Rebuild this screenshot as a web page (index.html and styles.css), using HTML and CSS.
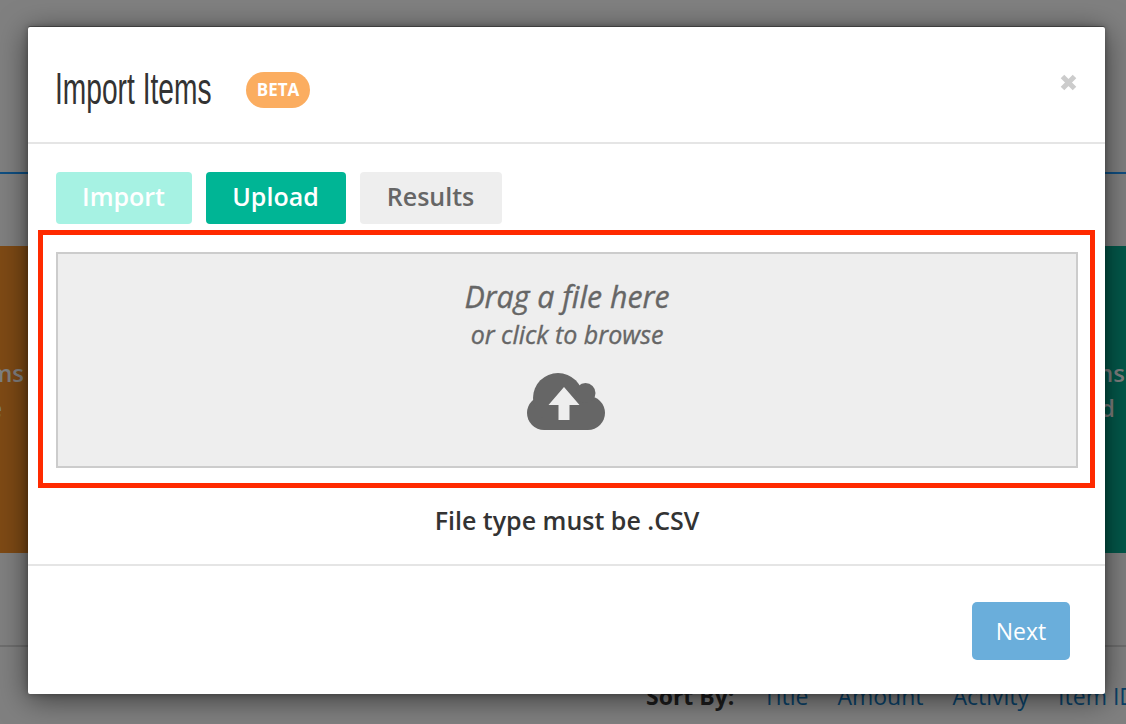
FILE: index.html
```html
<!DOCTYPE html>
<html lang="en">
<head>
<meta charset="utf-8">
<title>Import Items</title>
<link rel="stylesheet" href="styles.css">
</head>
<body>
<div class="page">
  <div class="page-header"></div>
  <div class="tiles">
    <div class="tile tile-orange"><span>ms</span><span class="tile-short">e</span></div>
    <div class="tile tile-green"><span>ns</span><span class="tile-short">d</span></div>
  </div>
  <div class="sort-bar">
    <strong>Sort By:</strong>
    <a>Title</a><a>Amount</a><a>Activity</a><a>Item ID</a>
  </div>
</div>
<div class="modal">
  <header class="modal-header">
    <h1 class="modal-title"><span>Import Items</span></h1>
    <span class="badge">BETA</span>
    <button class="close" aria-label="Close">
      <svg width="17" height="17" viewBox="0 0 17 17"><path d="M2.500 2.500 14.500 14.500M14.500 2.500 2.500 14.500"/></svg>
    </button>
  </header>
  <section class="modal-body">
    <nav class="tabs">
      <button class="tab tab-import">Import</button>
      <button class="tab tab-upload">Upload</button>
      <button class="tab tab-results">Results</button>
    </nav>
    <div class="highlight">
      <div class="dropzone">
        <p class="drop-main">Drag a file here</p>
        <p class="drop-sub">or click to browse</p>
        <svg class="cloud" width="78" height="57" viewBox="0 0 78 57">
          <g class="cloud-body">
            <circle cx="17" cy="40" r="17"/>
            <circle cx="61" cy="40" r="17"/>
            <circle cx="31" cy="25" r="25"/>
            <circle cx="58.500" cy="20" r="10"/>
            <rect x="17" y="30" width="44" height="27"/>
          </g>
          <path class="cloud-arrow" d="M37 14 52.500 32H42.500V47H31.500V32H21.500Z"/>
        </svg>
      </div>
    </div>
    <p class="file-note">File type must be .CSV</p>
  </section>
  <footer class="modal-footer">
    <button class="next">Next</button>
  </footer>
</div>
</body>
</html>
```
FILE: styles.css
```css
* { box-sizing: border-box; }
html, body { margin: 0; height: 100%; }
body {
  background: #808080;
  font-family: "Open Sans", sans-serif;
  overflow: hidden;
}
.page { height: 724px; overflow: hidden; }
.page-header { height: 174px; border-bottom: 2px solid #0f4f82; }
.tiles {
  display: flex;
  justify-content: space-between;
  height: 307px;
  margin-top: 72px;
}
.tile {
  display: flex;
  flex-direction: column;
  font-size: 24px;
  font-weight: 600;
  line-height: 35px;
  color: #808080;
  padding-top: 109px;
}
.tile-orange {
  width: 260px;
  margin-left: -60px;
  background: #7e4a15;
  text-align: right;
  padding-right: 176px;
}
.tile-orange .tile-short { margin-right: 22px; }
.tile-green {
  width: 126px;
  background: #03584a;
  text-align: right;
  padding-right: 1px;
}
.tile-green .tile-short { margin-right: 10px; }
.sort-bar {
  margin-top: 92px;
  border-top: 2px solid #6e6e6e;
  height: 78px;
  padding: 34px 0 0 646px;
  display: flex;
  font-size: 23px;
  line-height: 30px;
  white-space: nowrap;
}
.sort-bar strong { color: #1c1c1c; flex: none; width: 117px; }
.sort-bar a { color: #0a4167; flex: none; margin-right: 29px; }

.modal {
  position: absolute;
  left: 28px;
  top: 27px;
  width: 1077px;
  height: 667px;
  background: #fff;
  border-radius: 2px;
  box-shadow: 0 -1px 0 rgba(0,0,0,.3), 0 0 6px rgba(0,0,0,.3), 0 5px 30px rgba(0,0,0,.55);
  display: flex;
  flex-direction: column;
}
.modal-header {
  height: 117px;
  border-bottom: 2px solid #e5e5e5;
  padding: 45px 28px 0;
  display: flex;
  align-items: flex-start;
  position: relative;
}
.modal-title {
  margin: -5px 0 0 -1px;
  width: 191px;
  font-family: "Liberation Sans Narrow", "Liberation Sans", sans-serif;
  font-weight: 400;
  font-size: 44px;
  line-height: 44px;
  color: #333;
  white-space: nowrap;
}
.modal-title span {
  display: inline-block;
  transform: scaleX(.64);
  transform-origin: left center;
}
.badge {
  width: 64px;
  height: 36px;
  border-radius: 18px;
  background: #fbad60;
  color: #fff;
  font-size: 17px;
  font-weight: 700;
  line-height: 36px;
  text-align: center;
}
.close {
  position: absolute;
  top: 47px;
  right: 28px;
  padding: 0;
  border: 0;
  background: none;
  line-height: 0;
}
.close path { stroke: #ccc; stroke-width: 5; fill: none; }
.modal-body { height: 422px; padding: 28px 27px 0 28px; border-bottom: 2px solid #e5e5e5; }
.tabs { display: flex; gap: 14px; }
.tab {
  height: 52px;
  border: 0;
  border-radius: 4px;
  font-family: inherit;
  font-size: 25px;
  font-weight: 600;
  padding: 0 1px 5px 0;
}
.tab-import { width: 136px; background: #a6f2e3; color: #fff; }
.tab-upload { width: 140px; background: #00b595; color: #fff; }
.tab-results { width: 142px; background: #eee; color: #666; }
.highlight {
  margin: 6px -17px 0 -18px;
  height: 258px;
  border: 5px solid #ff2a00;
  padding: 17px 12px 15px 13px;
}
.dropzone {
  height: 216px;
  background: #eee;
  border: 2px solid #ccc;
  color: #666;
  text-align: center;
  font-style: italic;
  font-weight: 400;
  -webkit-text-stroke: .35px #666;
  padding-top: 23px;
}
.dropzone p { margin: 0; }
.drop-main { font-size: 30.300px; line-height: 40px; }
.drop-sub { font-size: 25px; line-height: 34px; }
.cloud { display: block; margin: 22px auto 0; transform: translateX(-1px); }
.cloud-body { fill: #666; }
.cloud-arrow { fill: #eee; }
.file-note {
  margin: 16px 0 0;
  text-align: center;
  font-size: 25px;
  font-weight: 600;
  line-height: 33px;
  color: #333;
}
.modal-footer { flex: 1; padding: 36px 35px 0; display: flex; justify-content: flex-end; align-items: flex-start; }
.next {
  width: 98px;
  height: 58px;
  border: 0;
  border-radius: 5px;
  background: #6aaedb;
  color: #fff;
  font-family: inherit;
  font-size: 23px;
  padding: 0;
}
```
